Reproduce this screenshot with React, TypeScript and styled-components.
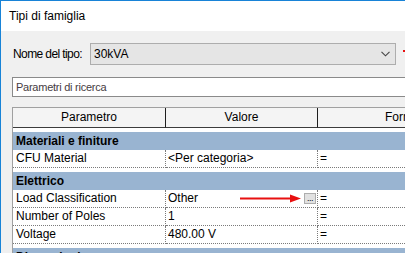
import React from "react";
import styled, { createGlobalStyle } from "styled-components";

const Global = createGlobalStyle`
  html, body { margin: 0; padding: 0; background: #ffffff; }
  body { font-family: "Liberation Sans", Arial, sans-serif; font-size: 12px; color: #000; }
  * { box-sizing: border-box; }
`;

const Window = styled.div`
  width: 405px;
  height: 253px;
  overflow: hidden;
  border-top: 1px solid #1883d7;
  border-left: 1px solid #1883d7;
  display: flex;
  flex-direction: column;
`;

const TitleBar = styled.div`
  height: 30px;
  flex: none;
  background: #ffffff;
  padding-left: 8px;
  line-height: 30px;
  font-size: 12px;
  color: #000;
`;

const Body = styled.div`
  position: relative;
  flex: 1;
  background: #f0f0f0;
  padding: 12px 0 0 11px;
  display: flex;
  flex-direction: column;
  overflow: hidden;
`;

const TypeRow = styled.div`
  display: flex;
  align-items: center;
  height: 22px;
`;

const Label = styled.span`
  width: 78px;
  flex: none;
  padding-left: 1px;
  white-space: nowrap;
  letter-spacing: -0.6px;
`;

const Combo = styled.div`
  width: 306px;
  flex: none;
  height: 22px;
  border: 1px solid #adadad;
  background: #e5e5e5;
  display: flex;
  align-items: center;
  justify-content: space-between;
  padding: 0 5px 0 3px;
`;

const Search = styled.div`
  margin-top: 12px;
  width: 420px;
  flex: none;
  height: 20px;
  border: 1px solid #8a8a8a;
  border-right: none;
  background: #fff;
  padding-left: 3px;
  line-height: 18px;
  font-size: 11px;
  letter-spacing: -0.25px;
  color: #463c42;
  white-space: nowrap;
`;

const Table = styled.div`
  margin-top: 10px;
  width: 485px;
  flex: none;
  border-top: 1px solid #a0a0a0;
  border-left: 1px solid #a0a0a0;
  background: #fff;
  display: flex;
  flex-direction: column;
`;

const Grid = styled.div`
  display: grid;
  grid-template-columns: 153px 152px 179px;
`;

const HeadCell = styled.div`
  height: 20px;
  background: #f4f4f4;
  border-bottom: 1px solid #3c3c3c;
  border-right: 1px solid #1e1e1e;
  text-align: center;
  line-height: 19px;
  white-space: nowrap;
`;

const Group = styled.div`
  padding-top: 4px;
`;

const Band = styled.div`
  height: 18px;
  background: #99b4d1;
  font-weight: bold;
  line-height: 18px;
  padding-left: 3px;
  white-space: nowrap;
`;

const Cell = styled.div<{ $pad: number; $last?: boolean }>`
  position: relative;
  height: 18px;
  line-height: 17px;
  padding-left: ${(p) => p.$pad}px;
  border-bottom: 1px dotted #7a7a7a;
  border-right: ${(p) => (p.$last ? "none" : "1px dotted #7a7a7a")};
  white-space: nowrap;
`;

const DotsButton = styled.span`
  position: absolute;
  right: 1px;
  top: 3px;
  width: 12px;
  height: 11px;
  border: 1px solid #adadad;
  background: #e1e1e1;
  display: flex;
  justify-content: center;
  font-size: 9px;
  line-height: 8px;
  color: #000;
  letter-spacing: -0.5px;
`;

const Arrow = styled.svg`
  position: absolute;
  left: 74px;
  top: 4px;
`;

const RedTick = styled.div`
  position: absolute;
  left: 402px;
  top: 19px;
  width: 3px;
  height: 2px;
  background: #e81010;
`;

type Row = { name: string; value: string; dots?: boolean };
type GroupData = { title: string; rows: Row[] };

const groups: GroupData[] = [
  { title: "Materiali e finiture", rows: [{ name: "CFU Material", value: "<Per categoria>" }] },
  {
    title: "Elettrico",
    rows: [
      { name: "Load Classification", value: "Other", dots: true },
      { name: "Number of Poles", value: "1" },
      { name: "Voltage", value: "480.00 V" },
    ],
  },
  { title: "Dimensioni", rows: [] },
];

export default function App() {
  return (
    <>
      <Global />
      <Window>
        <TitleBar>Tipi di famiglia</TitleBar>
        <Body>
          <RedTick />
          <TypeRow>
            <Label>Nome del tipo:</Label>
            <Combo>
              <span>30kVA</span>
              <svg width="9" height="6" viewBox="0 0 9 6">
                <path d="M0.5 0.8 L4.5 4.8 L8.5 0.8" fill="none" stroke="#444" strokeWidth="1.1" />
              </svg>
            </Combo>
          </TypeRow>
          <Search>Parametri di ricerca</Search>
          <Table>
            <Grid>
              <HeadCell>Parametro</HeadCell>
              <HeadCell>Valore</HeadCell>
              <HeadCell>Formula</HeadCell>
            </Grid>
            {groups.map((g) => (
              <Group key={g.title}>
                <Band>{g.title}</Band>
                {g.rows.map((r) => (
                  <Grid key={r.name}>
                    <Cell $pad={3}>{r.name}</Cell>
                    <Cell $pad={2}>
                      {r.value}
                      {r.dots && (
                        <>
                          <Arrow width="62" height="9" viewBox="0 0 62 9">
                            <line x1="0" y1="4.5" x2="52" y2="4.5" stroke="#e81010" strokeWidth="2" />
                            <polygon points="50,0.5 61,4.5 50,8.5" fill="#e81010" />
                          </Arrow>
                          <DotsButton>...</DotsButton>
                        </>
                      )}
                    </Cell>
                    <Cell $pad={2} $last>=</Cell>
                  </Grid>
                ))}
              </Group>
            ))}
          </Table>
        </Body>
      </Window>
    </>
  );
}
